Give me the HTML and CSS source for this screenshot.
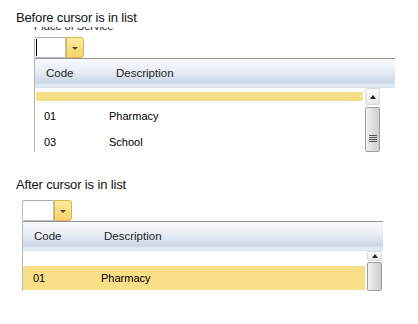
FILE: index.html
```html
<!DOCTYPE html>
<html>
<head>
<meta charset="utf-8">
<link rel="stylesheet" href="styles.css">
</head>
<body>
<div class="sec sec1">
  <div class="title">Before cursor is in list</div>
  <div class="clip-label"><span>Place of Service</span></div>
  <div class="combo">
    <div class="combo-input"><span class="caret"></span></div>
    <div class="combo-btn"><span class="tri"></span></div>
  </div>
  <div class="panel">
    <div class="hdr"><span class="c-code">Code</span><span>Description</span></div>
    <div class="pbody">
      <div class="list">
        <div class="strip"></div>
        <div class="row"><span class="c-code">01</span><span>Pharmacy</span></div>
        <div class="row"><span class="c-code">03</span><span>School</span></div>
      </div>
      <div class="sb">
        <div class="sb-up"><span class="up-tri"></span></div>
        <div class="sb-thumb"><span class="grip"></span></div>
      </div>
    </div>
  </div>
</div>

<div class="sec sec2">
  <div class="title">After cursor is in list</div>
  <div class="combo">
    <div class="combo-input"></div>
    <div class="combo-btn"><span class="tri"></span></div>
  </div>
  <div class="panel">
    <div class="hdr"><span class="c-code">Code</span><span>Description</span></div>
    <div class="pbody">
      <div class="list">
        <div class="blank"></div>
        <div class="row sel"><span class="c-code">01</span><span>Pharmacy</span></div>
      </div>
      <div class="sb">
        <div class="sb-up"><span class="up-tri"></span></div>
        <div class="sb-thumb"></div>
      </div>
    </div>
  </div>
</div>
</body>
</html>
```

FILE: styles.css
```css
html, body {
  margin: 0;
  padding: 0;
  background: #fff;
}
body {
  font-family: "Liberation Sans", Arial, sans-serif;
  color: #000;
  width: 418px;
  height: 324px;
  overflow: hidden;
}
.title {
  font-size: 13px;
  line-height: 16px;
  padding-left: 16px;
  color: #111;
  letter-spacing: -0.15px;
}
.sec1 {
  padding-top: 10px;
}
.sec1 .title { margin-bottom: 1px; }
.sec1 .combo, .sec1 .panel, .sec1 .clip-label { margin-left: 34px; }
.sec2 { margin-top: 25px; }
.sec2 .title { margin-bottom: 7px; }
.sec2 .combo, .sec2 .panel { margin-left: 22px; }

.clip-label {
  height: 5px;
  overflow: hidden;
  font-size: 11px;
  color: #222;
  width: 80px;
}
.clip-label span {
  display: block;
  line-height: 11px;
  margin-top: -6px;
}
.sec1 .combo { margin-top: 5px; }

.combo {
  display: flex;
  height: 21px;
}
.combo-input {
  width: 30px;
  height: 19px;
  border: 1px solid #b9bcc2;
  border-top-color: #a9acb2;
  border-radius: 2px 0 0 2px;
  background: #fff;
  position: relative;
}
.caret {
  position: absolute;
  left: 1px;
  top: 1px;
  width: 1px;
  height: 17px;
  background: #000;
}
.combo-btn {
  width: 16px;
  height: 19px;
  border: 1px solid #dcb354;
  border-radius: 0 3px 3px 0;
  background: linear-gradient(#fdeaa4, #f9dc7c 60%, #f7d56a);
  display: flex;
  align-items: center;
  justify-content: center;
}
.tri {
  width: 0;
  height: 0;
  border-left: 3.5px solid transparent;
  border-right: 3.5px solid transparent;
  border-top: 3.5px solid #4a4a4a;
  margin-top: 1px;
}

.panel {
  width: 360px;
  border-left: 1px solid #b3b6ba;
}
.hdr {
  border-top: 1px solid #929496;
  background: linear-gradient(#f8fafd 0%, #e9eef6 40%, #c9d5e6 84%, #dde6f1 85%, #e4ebf4 97%, #cfd8e3 100%);
  display: flex;
  align-items: center;
  padding-left: 11px;
  box-sizing: border-box;
  height: 30px;
  font-size: 11.5px;
  color: #1f1f1f;
  line-height: 1;
}
.c-code {
  display: inline-block;
  width: 70px;
}
.pbody {
  display: flex;
  overflow: hidden;
}
.sec1 .pbody { height: 64px; }
.sec2 .pbody { height: 40px; }
.list { flex: 1; }
.sec1 .list { padding-top: 4px; }
.strip {
  height: 9px;
  background: #f7df88;
  margin: 0 2px 2px 1px;
}
.row {
  height: 26px;
  display: flex;
  align-items: center;
  font-size: 11px;
  padding-left: 9px;
  color: #000;
}
.sec1 .row .c-code { width: 65px; }
.blank { height: 15px; }
.row.sel {
  height: 24px;
  background: #f7df88;
  margin-right: 2px;
  padding-left: 10px;
}
.sec2 .row .c-code { width: 68px; }

.sb {
  width: 15px;
  display: flex;
  flex-direction: column;
}
.sec1 .sb { margin-right: 15px; }
.sec2 .sb { margin-right: 1px; }
.sb-up {
  height: 17px;
  box-sizing: border-box;
  border: 1px solid #dadada;
  border-radius: 2px;
  background: linear-gradient(#fafafa, #e8e8e8);
  display: flex;
  align-items: center;
  justify-content: center;
}
.sec2 .sb-up { height: 18px; }
.up-tri {
  width: 0;
  height: 0;
  border-left: 3.5px solid transparent;
  border-right: 3.5px solid transparent;
  border-bottom: 4px solid #222;
}
.sb-thumb {
  margin-top: 2px;
  flex: 1;
  box-sizing: border-box;
  border: 1px solid #9d9d9d;
  border-radius: 2px;
  background: linear-gradient(90deg, #f2f2f2, #dedede 50%, #cfcfcf);
  display: flex;
  justify-content: center;
  padding-top: 27px;
}
.sec2 .sb-thumb { margin-top: 1px; }
.grip {
  width: 8px;
  height: 7px;
  background: repeating-linear-gradient(#555 0 1px, transparent 1px 2px);
}
```
